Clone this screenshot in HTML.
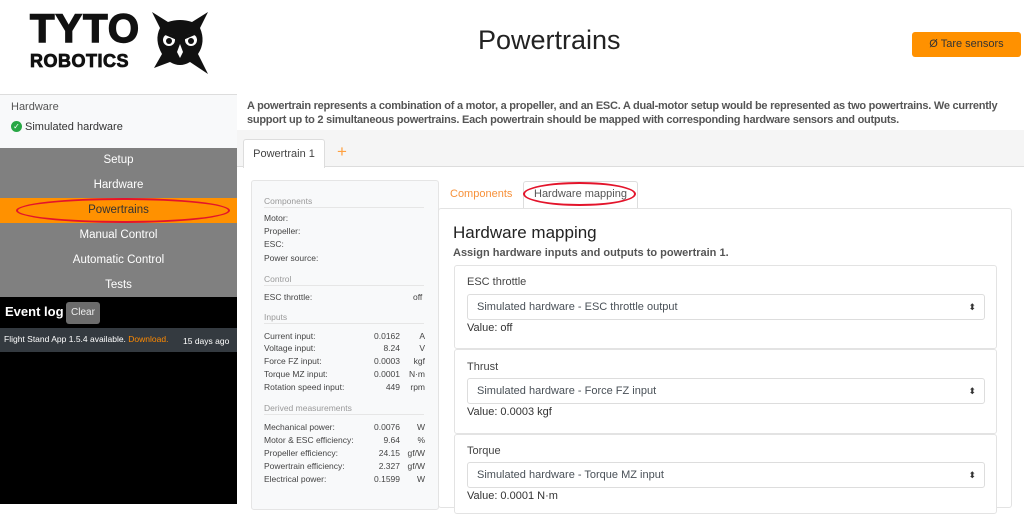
<!DOCTYPE html>
<html><head><meta charset="utf-8"><style>
*{box-sizing:border-box;margin:0;padding:0}
body{width:1024px;height:504px;overflow:hidden;background:#fff;font-family:"Liberation Sans",sans-serif;position:relative;color:#212529}
.a{position:absolute;white-space:nowrap}
.nav{position:absolute;left:0;width:237px;height:25px;line-height:25px;text-align:center;color:#fff;font-size:11.5px}
.lp{font-size:8.5px;color:#444}
.lh{font-size:8.5px;color:#999}
.hr{position:absolute;left:264px;width:160px;height:1px;background:#e6e6e6}
.sec{position:absolute;left:454px;width:543px;border:1px solid #e3e3e3;border-radius:3px;background:#fff}
.sel{position:absolute;left:12px;width:518px;height:26px;border:1px solid #ddd;border-radius:3px;font-size:11px;color:#495057;line-height:24px;padding-left:9px}
.sel:after{content:"⬍";position:absolute;right:8px;top:0;font-size:9px;color:#333}
</style></head><body>
<!-- logo -->
<div class="a" style="left:30px;top:8px;font-weight:900;font-size:40px;line-height:42px;color:#111;transform:scaleX(1.0);transform-origin:left;letter-spacing:1px;font-family:'Liberation Sans',sans-serif;-webkit-text-stroke:1.5px #111">TYTO</div>
<div class="a" style="left:30px;top:51px;font-weight:bold;font-size:18px;line-height:20px;color:#111;letter-spacing:0.5px;-webkit-text-stroke:0.8px #111">ROBOTICS</div>
<svg class="a" style="left:150px;top:10px" width="60" height="66" viewBox="0 0 60 66">
<path d="M2 2 L18 12 Q30 8 42 12 L58 2 L50 18 Q56 32 48 44 L58 64 L40 52 Q30 58 20 52 L4 58 L12 44 Q4 30 10 18 Z" fill="#111"/>
<circle cx="19" cy="30" r="6" fill="#fff"/><circle cx="41" cy="30" r="6" fill="#fff"/>
<circle cx="19" cy="31" r="3" fill="#111"/><circle cx="41" cy="31" r="3" fill="#111"/>
<path d="M12 22 L26 28 M48 22 L34 28" stroke="#111" stroke-width="3"/>
<path d="M30 34 L27 42 L30 48 L33 42 Z" fill="#fff"/>
</svg>
<div class="a" style="left:478px;top:25px;font-size:27px;color:#222">Powertrains</div>
<div class="a" style="left:912px;top:32px;width:109px;height:25px;background:#ff9100;border-radius:3px;color:#333;font-size:11px;line-height:25px;text-align:center">Ø Tare sensors</div>
<!-- sidebar -->
<div class="a" style="left:0;top:94px;width:237px;height:54px;background:#f8f9fa;border-top:1px solid #ddd"></div>
<div class="a" style="left:11px;top:101px;font-size:11px;color:#555">Hardware</div>
<div class="a" style="left:11px;top:121px;width:11px;height:11px;border-radius:50%;background:#28a745;color:#fff;font-size:8px;line-height:11px;text-align:center">✓</div>
<div class="a" style="left:25px;top:121px;font-size:11px;color:#333">Simulated hardware</div>
<div class="a" style="left:0;top:148px;width:237px;height:149px;background:#808080"></div>
<div class="nav" style="top:148px">Setup</div>
<div class="nav" style="top:173px">Hardware</div>
<div class="nav" style="top:198px;background:#ff9100;color:#333">Powertrains</div>
<div class="a" style="left:16px;top:198px;width:214px;height:25px;border:2px solid #e3142b;border-radius:50%"></div>
<div class="nav" style="top:223px">Manual Control</div>
<div class="nav" style="top:248px">Automatic Control</div>
<div class="nav" style="top:273px">Tests</div>
<div class="a" style="left:0;top:297px;width:237px;height:207px;background:#000"></div>
<div class="a" style="left:5px;top:304px;font-size:13px;color:#fff;font-weight:bold">Event log</div>
<div class="a" style="left:66px;top:302px;width:34px;height:22px;background:#6c6c6c;border-radius:3px;color:#eee;font-size:10px;line-height:22px;text-align:center">Clear</div>
<div class="a" style="left:0;top:328px;width:237px;height:24px;background:#343a40"></div>
<div class="a" style="left:4px;top:334px;font-size:8.5px;color:#fff">Flight Stand App 1.5.4 available. <span style="color:#ff8a00">Download.</span></div>
<div class="a" style="left:183px;top:336px;font-size:8.5px;color:#fff">15 days ago</div>
<!-- intro -->
<div class="a" style="left:247px;top:99px;font-size:11px;line-height:14px;color:#555;font-weight:bold;white-space:normal;width:775px;letter-spacing:-0.25px">A powertrain represents a combination of a motor, a propeller, and an ESC. A dual-motor setup would be represented as two powertrains. We currently support up to 2 simultaneous powertrains. Each powertrain should be mapped with corresponding hardware sensors and outputs.</div>
<div class="a" style="left:237px;top:130px;width:787px;height:37px;background:#f5f5f5;border-bottom:1px solid #ddd"></div>
<div class="a" style="left:243px;top:139px;width:82px;height:29px;background:#fff;border:1px solid #ddd;border-bottom:none;border-radius:3px 3px 0 0;font-size:11px;color:#444;text-align:center;line-height:29px">Powertrain 1</div>
<div class="a" style="left:337px;top:142px;font-size:17px;color:#ffa040">+</div>
<!-- left stats panel -->
<div class="a" style="left:251px;top:180px;width:188px;height:330px;background:#f8f9fa;border:1px solid #e5e5e5;border-radius:3px"></div>
<div class="a lh" style="left:264px;top:196px">Components</div><div class="hr" style="top:207px"></div>
<div class="a lp" style="left:264px;top:213px">Motor:</div>
<div class="a lp" style="left:264px;top:226px">Propeller:</div>
<div class="a lp" style="left:264px;top:239px">ESC:</div>
<div class="a lp" style="left:264px;top:253px">Power source:</div>
<div class="a lh" style="left:264px;top:274px">Control</div><div class="hr" style="top:285px"></div>
<div class="a lp" style="left:264px;top:292px">ESC throttle:</div><div class="a lp" style="left:413px;top:292px">off</div>
<div class="a lh" style="left:264px;top:312px">Inputs</div><div class="hr" style="top:323px"></div>
<div id="rows"></div>
<div class="a lh" style="left:264px;top:403px">Derived measurements</div><div class="hr" style="top:414px"></div>
<script>
var r=[[331,"Current input:","0.0162","A"],[343,"Voltage input:","8.24","V"],[356,"Force FZ input:","0.0003","kgf"],[369,"Torque MZ input:","0.0001","N·m"],[382,"Rotation speed input:","449","rpm"],
[422,"Mechanical power:","0.0076","W"],[435,"Motor & ESC efficiency:","9.64","%"],[448,"Propeller efficiency:","24.15","gf/W"],[461,"Powertrain efficiency:","2.327","gf/W"],[474,"Electrical power:","0.1599","W"]];
var h="";r.forEach(function(x){h+='<div class="a lp" style="left:264px;top:'+x[0]+'px">'+x[1]+'</div><div class="a lp" style="left:360px;width:40px;text-align:right;top:'+x[0]+'px">'+x[2]+'</div><div class="a lp" style="left:400px;width:25px;text-align:right;top:'+x[0]+'px">'+x[3]+'</div>';});
document.getElementById("rows").outerHTML=h;
</script>
<!-- right card -->
<div class="a" style="left:450px;top:188px;font-size:11px;color:#f7913a">Components</div>
<div class="a" style="left:523px;top:181px;width:115px;height:28px;border:1px solid #ddd;border-bottom:none;border-radius:3px 3px 0 0;background:#fff"></div>
<div class="a" style="left:534px;top:188px;font-size:11px;color:#555">Hardware mapping</div>
<div class="a" style="left:523px;top:182px;width:113px;height:24px;border:2px solid #e3142b;border-radius:50%"></div>
<div class="a" style="left:438px;top:208px;width:574px;height:300px;border:1px solid #e3e3e3;border-radius:3px"></div>
<div class="a" style="left:453px;top:223px;font-size:17px;color:#222">Hardware mapping</div>
<div class="a" style="left:453px;top:247px;font-size:11px;color:#555;font-weight:bold">Assign hardware inputs and outputs to powertrain 1.</div>
<div class="sec" style="top:265px;height:84px"><div class="a" style="left:12px;top:10px;font-size:11px;color:#444">ESC throttle</div><div class="sel" style="top:28px">Simulated hardware - ESC throttle output</div><div class="a" style="left:12px;top:56px;font-size:11px;color:#333">Value: off</div></div>
<div class="sec" style="top:349px;height:85px"><div class="a" style="left:12px;top:11px;font-size:11px;color:#444">Thrust</div><div class="sel" style="top:28px">Simulated hardware - Force FZ input</div><div class="a" style="left:12px;top:56px;font-size:11px;color:#333">Value: 0.0003 kgf</div></div>
<div class="sec" style="top:434px;height:80px"><div class="a" style="left:12px;top:10px;font-size:11px;color:#444">Torque</div><div class="sel" style="top:27px">Simulated hardware - Torque MZ input</div><div class="a" style="left:12px;top:55px;font-size:11px;color:#333">Value: 0.0001 N·m</div></div>
</body></html>
